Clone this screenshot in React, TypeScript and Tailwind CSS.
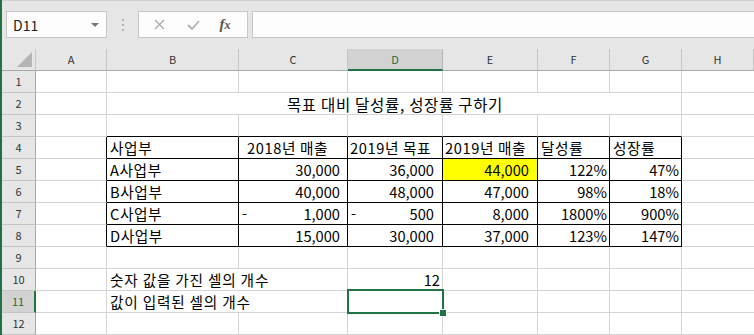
import React from "react";

const FONT = { fontFamily: '"Noto Sans CJK KR", "Noto Sans", sans-serif' };

type CellDef = {
  text?: string;
  align?: "l" | "r" | "c";
  pad?: string;
  dash?: boolean;
  yellow?: boolean;
  ko?: boolean;
};

const cols = ["A", "B", "C", "D", "E", "F", "G", "H"];

const data: Record<number, Record<number, CellDef>> = {
  4: {
    2: { text: "사업부", pad: "pl-[3px]", ko: true },
    3: { text: "2018년 매출", pad: "pl-[8px]", ko: true },
    4: { text: "2019년 목표", pad: "pl-[2px]", ko: true },
    5: { text: "2019년 매출", pad: "pl-[2px]", ko: true },
    6: { text: "달성률", pad: "pl-[3px]", ko: true },
    7: { text: "성장률", pad: "pl-[3px]", ko: true },
  },
  5: {
    2: { text: "A사업부", pad: "pl-[3px]", ko: true },
    3: { text: "30,000", align: "r", pad: "pr-[7px]" },
    4: { text: "36,000", align: "r", pad: "pr-[8px]" },
    5: { text: "44,000", align: "r", pad: "pr-[8px]", yellow: true },
    6: { text: "122%", align: "r", pad: "pr-[2px]" },
    7: { text: "47%", align: "r", pad: "pr-[2px]" },
  },
  6: {
    2: { text: "B사업부", pad: "pl-[3px]", ko: true },
    3: { text: "40,000", align: "r", pad: "pr-[7px]" },
    4: { text: "48,000", align: "r", pad: "pr-[8px]" },
    5: { text: "47,000", align: "r", pad: "pr-[8px]" },
    6: { text: "98%", align: "r", pad: "pr-[2px]" },
    7: { text: "18%", align: "r", pad: "pr-[2px]" },
  },
  7: {
    2: { text: "C사업부", pad: "pl-[3px]", ko: true },
    3: { text: "1,000", align: "r", pad: "pr-[7px]", dash: true },
    4: { text: "500", align: "r", pad: "pr-[8px]", dash: true },
    5: { text: "8,000", align: "r", pad: "pr-[8px]" },
    6: { text: "1800%", align: "r", pad: "pr-[2px]" },
    7: { text: "900%", align: "r", pad: "pr-[2px]" },
  },
  8: {
    2: { text: "D사업부", pad: "pl-[3px]", ko: true },
    3: { text: "15,000", align: "r", pad: "pr-[7px]" },
    4: { text: "30,000", align: "r", pad: "pr-[8px]" },
    5: { text: "37,000", align: "r", pad: "pr-[8px]" },
    6: { text: "123%", align: "r", pad: "pr-[2px]" },
    7: { text: "147%", align: "r", pad: "pr-[2px]" },
  },
  10: {
    4: { text: "12", align: "r", pad: "pr-[2px]" },
  },
};

function borderClasses(r: number, c: number) {
  const rightBlack = r >= 4 && r <= 8 && c >= 1 && c <= 7;
  const bottomBlack = c >= 2 && c <= 7 && r >= 3 && r <= 8;
  const right = c === 8 ? "" : rightBlack ? "border-r border-r-black" : "border-r border-r-[#d4d4d4]";
  const bottom = bottomBlack ? "border-b border-b-black" : "border-b border-b-[#d4d4d4]";
  return right + " " + bottom;
}

function Cell({ r, c, def }: { r: number; c: number; def?: CellDef }) {
  const selected = r === 11 && c === 4;
  return (
    <div
      className={
        "relative h-[22px] flex items-center leading-[20px] text-[14.67px] text-black whitespace-nowrap " +
        borderClasses(r, c) +
        " " +
        (def?.yellow ? "bg-[#ffff00] " : "bg-white ") +
        (def?.align === "r" ? "justify-end " : "justify-start ") +
        (def?.ko ? "tracking-[0.6px] " : "") +
        (def?.pad ?? "")
      }
    >
      {def?.dash && (
        <span className="absolute left-[3px] top-0 leading-[20px]">-</span>
      )}
      {def?.text}
      {selected && (
        <div className="absolute -left-[1px] -top-[2px] w-[97px] h-[25px] border-2 border-[#217346] z-10">
          <div className="absolute left-[90px] top-[18px] w-[8px] h-[8px] bg-[#217346] border border-white" />
        </div>
      )}
    </div>
  );
}

function RowHeader({ r }: { r: number }) {
  const sel = r === 11;
  return (
    <div
      className={
        "h-[22px] flex items-center justify-center text-[11px] border-b border-b-[#c6c6c6] " +
        (sel
          ? "bg-[#d2d2d2] text-[#1e6b41] border-r-2 border-r-[#217346]"
          : "bg-[#e6e6e6] text-[#333] border-r border-r-[#a8a8a8]")
      }
    >
      {r}
    </div>
  );
}

function Row({ r }: { r: number }) {
  const cells: React.ReactNode[] = [];
  cells.push(<RowHeader key="h" r={r} />);
  if (r === 2) {
    cells.push(<Cell key="a" r={r} c={1} />);
    cells.push(
      <div
        key="m"
        className="col-span-6 h-[22px] flex items-center justify-center leading-[20px] text-[15.5px] tracking-[0.7px] text-black bg-white border-r border-r-[#d4d4d4] border-b border-b-[#d4d4d4]"
      >
        <span className="pl-[2px]">목표 대비 달성률, 성장률 구하기</span>
      </div>
    );
    cells.push(<Cell key="h2" r={r} c={8} />);
  } else if (r === 10 || r === 11) {
    const label = r === 10 ? "숫자 값을 가진 셀의 개수" : "값이 입력된 셀의 개수";
    cells.push(<Cell key="a" r={r} c={1} />);
    cells.push(
      <div
        key="m"
        className="col-span-2 h-[22px] flex items-center leading-[20px] text-[14.67px] tracking-[0.8px] text-black bg-white pl-[3px] border-r border-r-[#d4d4d4] border-b border-b-[#d4d4d4] whitespace-nowrap"
      >
        {label}
      </div>
    );
    for (let c = 4; c <= 8; c++) {
      cells.push(<Cell key={c} r={r} c={c} def={data[r]?.[c]} />);
    }
  } else {
    for (let c = 1; c <= 8; c++) {
      cells.push(<Cell key={c} r={r} c={c} def={data[r]?.[c]} />);
    }
  }
  return <>{cells}</>;
}

export default function App() {
  const rows = Array.from({ length: 12 }, (_, i) => i + 1);
  return (
    <div className="w-[754px] h-[335px] overflow-hidden bg-white flex" style={FONT}>
      <div className="w-[2px] h-full bg-[#217346] shrink-0" />
      <div className="flex-1 flex flex-col min-w-0">
        {/* toolbar */}
        <div className="h-[49px] bg-[#e6e6e6] border-t border-t-[#d0d0d0] flex items-start pt-[10px] shrink-0">
          <div className="ml-[4px] w-[101px] h-[27px] bg-[#fdfdfd] border border-[#c6c6c6] flex items-center justify-between pl-[6px] pr-[6px]">
            <span className="text-[14px] text-[#222] leading-none">D11</span>
            <svg width="10" height="6" viewBox="0 0 10 6">
              <path d="M1 1 L9 1 L5 5 Z" fill="#777" />
            </svg>
          </div>
          <div className="w-[31px] h-[27px] flex flex-col items-center justify-center gap-[3px]">
            <div className="w-[2px] h-[2px] bg-[#b4b4b4]" />
            <div className="w-[2px] h-[2px] bg-[#b4b4b4]" />
            <div className="w-[2px] h-[2px] bg-[#b4b4b4]" />
          </div>
          <div className="w-[110px] h-[27px] bg-[#fdfdfd] border border-[#c6c6c6] flex items-center">
            <div className="w-[40px] flex justify-center">
              <svg width="11" height="11" viewBox="0 0 11 11">
                <path d="M1 1 L10 10 M10 1 L1 10" stroke="#ababab" strokeWidth="1.3" />
              </svg>
            </div>
            <div className="w-[28px] flex justify-center">
              <svg width="13" height="10" viewBox="0 0 13 10">
                <path d="M1 5 L5 9 L12 1" stroke="#b2b2b2" strokeWidth="1.8" fill="none" />
              </svg>
            </div>
            <div className="flex-1 flex justify-center pr-[4px]">
              <span
                className="text-[15px] italic font-bold text-[#555] leading-none"
                style={{ fontFamily: '"Liberation Serif", serif' }}
              >
                f<span className="text-[12px]">x</span>
              </span>
            </div>
          </div>
          <div className="ml-[4px] flex-1 h-[27px] bg-[#fdfdfd] border border-[#c6c6c6] border-r-0" />
        </div>
        {/* grid */}
        <div className="grid grid-cols-[34px_71px_132px_109px_95px_95px_72px_72px_1fr]">
          <div className="h-[22px] bg-[#e6e6e6] border-r border-r-[#c6c6c6] border-b border-b-[#a8a8a8] relative">
            <svg className="absolute left-[15px] top-[3px]" width="15" height="15" viewBox="0 0 15 15">
              <path d="M15 0 L15 15 L0 15 Z" fill="#b5b5b5" />
            </svg>
          </div>
          {cols.map((c) =>
            c === "D" ? (
              <div
                key={c}
                className="h-[22px] bg-[#d2d2d2] border-r border-r-[#b4b4b4] border-b-2 border-b-[#217346] flex items-center justify-center text-[11px] text-[#1e6b41]"
              >
                {c}
              </div>
            ) : (
              <div
                key={c}
                className="h-[22px] bg-[#e6e6e6] border-r border-r-[#c6c6c6] border-b border-b-[#a8a8a8] flex items-center justify-center text-[11px] text-[#333]"
              >
                {c}
              </div>
            )
          )}
          {rows.map((r) => (
            <Row key={r} r={r} />
          ))}
        </div>
      </div>
    </div>
  );
}
